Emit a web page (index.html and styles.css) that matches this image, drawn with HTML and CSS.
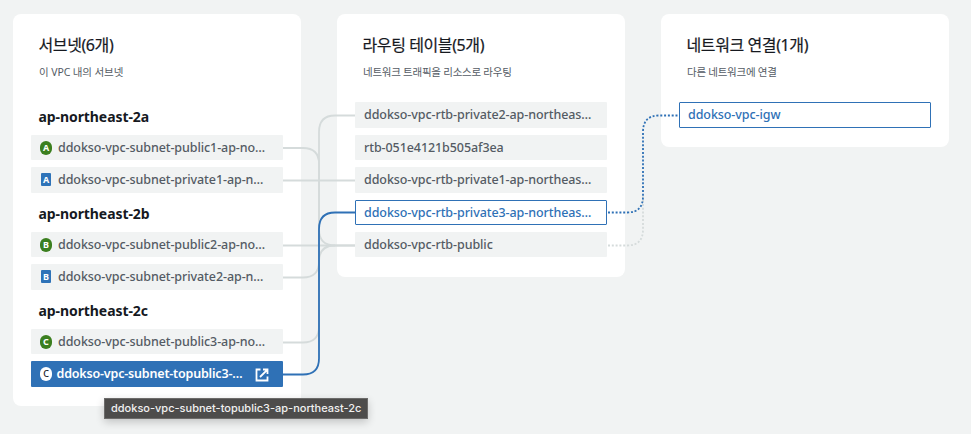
FILE: index.html
```html
<!DOCTYPE html>
<html lang="ko">
<head>
<meta charset="utf-8">
<title>VPC 리소스 맵</title>
<link rel="stylesheet" href="styles.css">
</head>
<body>
<main class="map">
  <section class="card card-subnets">
    <h2 class="title">서브넷(6개)</h2>
    <p class="desc">이 VPC 내의 서브넷</p>
    <div class="list">
      <h3 class="zone">ap-northeast-2a</h3>
      <div class="node"><span class="badge public">A</span><span class="label">ddokso-vpc-subnet-public1-ap-no…</span></div>
      <div class="node"><span class="badge private">A</span><span class="label">ddokso-vpc-subnet-private1-ap-n…</span></div>
      <h3 class="zone">ap-northeast-2b</h3>
      <div class="node"><span class="badge public">B</span><span class="label">ddokso-vpc-subnet-public2-ap-no…</span></div>
      <div class="node"><span class="badge private">B</span><span class="label">ddokso-vpc-subnet-private2-ap-n…</span></div>
      <h3 class="zone">ap-northeast-2c</h3>
      <div class="node"><span class="badge public">C</span><span class="label">ddokso-vpc-subnet-public3-ap-no…</span></div>
      <div class="node selected"><span class="badge current">C</span><span class="label">ddokso-vpc-subnet-topublic3-…</span>
        <svg class="external" viewBox="0 0 14 14"><path d="M5.5 1.5H1.5V12.5H12.5V8.5M8 1.5H12.5V6M12.2 1.8L5 9"/></svg>
      </div>
    </div>
  </section>
  <section class="card">
    <h2 class="title">라우팅 테이블(5개)</h2>
    <p class="desc">네트워크 트래픽을 리소스로 라우팅</p>
    <div class="list">
      <div class="node"><span class="label">ddokso-vpc-rtb-private2-ap-northeas…</span></div>
      <div class="node"><span class="label">rtb-051e4121b505af3ea</span></div>
      <div class="node"><span class="label">ddokso-vpc-rtb-private1-ap-northeas…</span></div>
      <div class="node linked"><span class="label">ddokso-vpc-rtb-private3-ap-northeas…</span></div>
      <div class="node"><span class="label">ddokso-vpc-rtb-public</span></div>
    </div>
  </section>
  <section class="card">
    <h2 class="title">네트워크 연결(1개)</h2>
    <p class="desc">다른 네트워크에 연결</p>
    <div class="list">
      <div class="node linked"><span class="label">ddokso-vpc-igw</span></div>
    </div>
  </section>
  <svg class="links" viewBox="0 0 971 434">
    <g class="idle">
      <path d="M283 148H303Q319 148 319 164V229Q319 245.500 335 245.500H355"/>
      <path d="M283 180.500H355"/>
      <path d="M283 245.500H355"/>
      <path d="M283 277.500H303Q319 277.500 319 261.500V132Q319 115.500 335 115.500H355"/>
      <path d="M283 342.500H303Q319 342.500 319 326.500V261.500Q319 245.500 335 245.500"/>
    </g>
    <path class="idle dotted" d="M608 245.500H627Q643 245.500 643 229.500V196"/>
    <path class="active" d="M283 374.500H303Q319 374.500 319 358.500V229Q319 212.500 335 212.500H355"/>
    <path class="active dotted" d="M608 212.500H627Q643 212.500 643 196.500V132Q643 115.500 659 115.500H679"/>
  </svg>
  <div class="tooltip">ddokso-vpc-subnet-topublic3-ap-northeast-2c</div>
</main>
</body>
</html>
```
FILE: styles.css
```css
body {
  margin: 0;
  background: #f1f3f3;
  font-family: "Noto Sans", "Noto Sans CJK KR", sans-serif;
}
.map {
  position: relative;
  box-sizing: border-box;
  width: 971px;
  height: 434px;
  padding: 14px 13px;
  display: flex;
  align-items: flex-start;
  gap: 36px;
  overflow: hidden;
}
.card {
  box-sizing: border-box;
  flex: 0 0 288px;
  padding: 20px 18px 19.3px;
  border-radius: 8px;
  background: #fff;
}
.title {
  margin: 0 7.5px;
  font: 400 16px/22px "Noto Sans", "Noto Sans CJK KR", sans-serif;
  letter-spacing: -0.4px;
  color: #16191f;
  -webkit-text-stroke: 0.2px #16191f;
}
.desc {
  margin: 8px 8px 0;
  font-size: 10.5px;
  line-height: 16px;
  letter-spacing: -0.25px;
  color: #545b64;
}
.card-subnets .desc { letter-spacing: -0.1px; }
.list {
  margin-top: 22.45px;
  display: flex;
  flex-direction: column;
  gap: 6.86px;
}
.zone {
  margin: 0 7.5px;
  height: 25.5px;
  font-size: 14px;
  font-weight: 700;
  line-height: 28.6px;
  letter-spacing: -0.08px;
  color: #16191f;
}
.zone:first-child { line-height: 29px; }
.node {
  box-sizing: border-box;
  height: 25.5px;
  padding: 0 9px;
  display: flex;
  align-items: center;
  border-radius: 1px;
  background: #f1f3f3;
  color: #545b64;
  font-size: 12.5px;
  font-weight: 500;
  line-height: 24px;
  letter-spacing: -0.08px;
  white-space: nowrap;
}
.label { padding-top: 0.5px; }
.badge {
  flex: none;
  width: 12px;
  height: 14px;
  margin-right: 6px;
  border-radius: 6px;
  color: #fff;
  font: 700 9px/14px "Noto Sans", sans-serif;
  letter-spacing: 0;
  text-align: center;
}
.public { background: #3b7f1f; }
.private {
  width: 10px;
  height: 13px;
  margin: 0 7px 0 1px;
  border-radius: 1px;
  background: #2e73b8;
  line-height: 13px;
}
.current {
  margin-right: 4.5px;
  background: #fff;
  color: #16191f;
  font-weight: 500;
}
.selected {
  background: #2f71b6;
  color: #fff;
  font-weight: 600;
  letter-spacing: -0.18px;
}
.external {
  width: 14px;
  height: 14px;
  margin: 2px 5px 0 auto;
  fill: none;
  stroke: #fff;
  stroke-width: 1.8;
}
.linked {
  padding: 0 8px;
  border: 1px solid #2f71b6;
  background: #fff;
  color: #2f71b6;
}
.links {
  position: absolute;
  inset: 0;
  width: 971px;
  height: 434px;
  fill: none;
  pointer-events: none;
}
.idle { stroke: #d5dbdb; stroke-width: 1.8; }
.active { stroke: #2f71b6; stroke-width: 1.8; }
.dotted { stroke-dasharray: 2 1.8; }
.tooltip {
  position: absolute;
  left: 104px;
  top: 398px;
  box-sizing: border-box;
  width: 264px;
  height: 21px;
  padding-left: 6px;
  border: 1px solid #6c6b6a;
  background: #4d4c4b;
  color: #f1f1f1;
  font: 500 11px/18px Inter, sans-serif;
  white-space: nowrap;
  box-shadow: 0 3px 8px rgba(0, 0, 0, 0.2);
}
```
